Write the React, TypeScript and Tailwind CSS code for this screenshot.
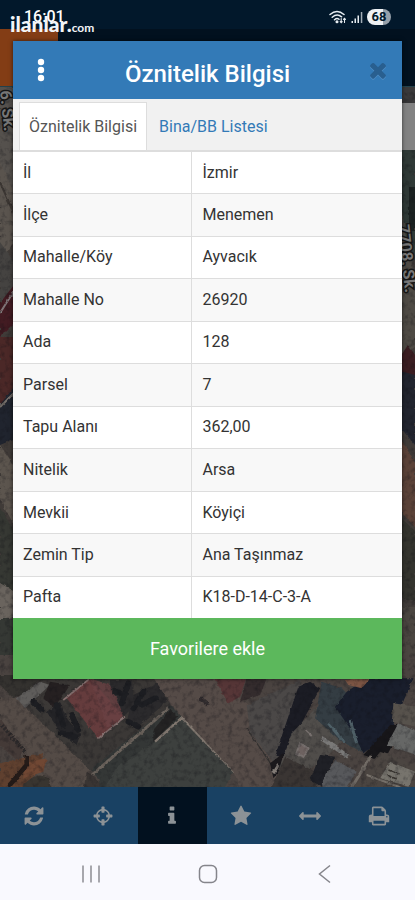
import React, { useState } from 'react';

const ICONS = {
  refresh:
    'M1639 1056q0 5-1 7-64 268-268 434.5t-478 166.5q-146 0-282.5-55t-243.5-157l-129 129q-19 19-45 19t-45-19-19-45v-448q0-26 19-45t45-19h448q26 0 45 19t19 45-19 45l-137 137q71 66 161 102t187 36q134 0 250-65t186-179q11-17 53-117 8-23 30-23h192q13 0 22.5 9.5t9.5 22.5zm25-800v448q0 26-19 45t-45 19h-448q-26 0-45-19t-19-45 19-45l138-138q-148-137-349-137-134 0-250 65t-186 179q-11 17-53 117-8 23-30 23h-199q-13 0-22.5-9.5t-9.5-22.5v-7q65-268 270-434.5t480-166.5q146 0 284 55.5t245 156.5l130-129q19-19 45-19t45 19 19 45z',
  crosshairs:
    'M1325 1024h-109q-26 0-45-19t-19-45v-128q0-26 19-45t45-19h109q-32-108-112.5-188.5t-188.5-112.5v109q0 26-19 45t-45 19h-128q-26 0-45-19t-19-45v-109q-108 32-188.5 112.5t-112.5 188.5h109q26 0 45 19t19 45v128q0 26-19 45t-45 19h-109q32 108 112.5 188.5t188.5 112.5v-109q0-26 19-45t45-19h128q26 0 45 19t19 45v109q108-32 188.5-112.5t112.5-188.5zm339-192v128q0 26-19 45t-45 19h-143q-37 161-154.5 278.5t-278.5 154.5v143q0 26-19 45t-45 19h-128q-26 0-45-19t-19-45v-143q-161-37-278.5-154.5t-154.5-278.5h-143q-26 0-45-19t-19-45v-128q0-26 19-45t45-19h143q37-161 154.5-278.5t278.5-154.5v-143q0-26 19-45t45-19h128q26 0 45 19t19 45v143q161 37 278.5 154.5t154.5 278.5h143q26 0 45 19t19 45z',
  info:
    'M1216 1344v128q0 26-19 45t-45 19h-512q-26 0-45-19t-19-45v-128q0-26 19-45t45-19h64v-384h-64q-26 0-45-19t-19-45v-128q0-26 19-45t45-19h384q26 0 45 19t19 45v576h64q26 0 45 19t19 45zm-128-1152v192q0 26-19 45t-45 19h-256q-26 0-45-19t-19-45v-192q0-26 19-45t45-19h256q26 0 45 19t19 45z',
  star:
    'M1728 647q0 22-26 48l-363 354 86 500q1 7 1 20 0 21-10.5 35.5t-30.5 14.5q-19 0-40-12l-449-236-449 236q-22 12-40 12-21 0-31.5-14.5t-10.5-35.5q0-6 2-20l86-500-364-354q-25-27-25-48 0-37 56-46l502-73 225-455q19-41 49-41t49 41l225 455 502 73q56 9 56 46z',
  arrows:
    'M1792 896q0 26-19 45l-256 256q-19 19-45 19t-45-19-19-45v-128h-1024v128q0 26-19 45t-45 19-45-19l-256-256q-19-19-19-45t19-45l256-256q19-19 45-19t45 19 19 45v128h1024v-128q0-26 19-45t45-19 45 19l256 256q19 19 19 45z',
  print:
    'M448 1536h896v-256h-896v256zm0-640h896v-384h-160q-40 0-68-28t-28-68v-160h-640v640zm1152 64q0-26-19-45t-45-19-45 19-19 45 19 45 45 19 45-19 19-45zm128 0v416q0 13-9.5 22.5t-22.5 9.5h-224v160q0 40-28 68t-68 28h-960q-40 0-68-28t-28-68v-160h-224q-13 0-22.5-9.5t-9.5-22.5v-416q0-79 56.5-135.5t135.5-56.5h64v-544q0-40 28-68t68-28h672q40 0 88 20t76 48l152 152q28 28 48 76t20 88v256h64q79 0 135.5 56.5t56.5 135.5z',
  times:
    'M1490 1322q0 40-28 68l-136 136q-28 28-68 28t-68-28l-294-294-294 294q-28 28-68 28t-68-28l-136-136q-28-28-28-68t28-68l294-294-294-294q-28-28-28-68t28-68l136-136q28-28 68-28t68 28l294 294 294-294q28-28 68-28t68 28l136 136q28 28 28 68t-28 68l-294 294 294 294q28 28 28 68z',
};

const ROWS = [
  ['İl', 'İzmir'],
  ['İlçe', 'Menemen'],
  ['Mahalle/Köy', 'Ayvacık'],
  ['Mahalle No', '26920'],
  ['Ada', '128'],
  ['Parsel', '7'],
  ['Tapu Alanı', '362,00'],
  ['Nitelik', 'Arsa'],
  ['Mevkii', 'Köyiçi'],
  ['Zemin Tip', 'Ana Taşınmaz'],
  ['Pafta', 'K18-D-14-C-3-A'],
];

const TOOLS: { icon: keyof typeof ICONS; label: string }[] = [
  { icon: 'refresh', label: 'Yenile' },
  { icon: 'crosshairs', label: 'Konum' },
  { icon: 'info', label: 'Bilgi' },
  { icon: 'star', label: 'Favoriler' },
  { icon: 'arrows', label: 'Ölçüm' },
  { icon: 'print', label: 'Yazdır' },
];

const Icon: React.FC<{ name: keyof typeof ICONS; className?: string }> = ({ name, className }) => (
  <svg viewBox="0 0 1792 1792" fill="currentColor" className={className} aria-hidden="true">
    <path d={ICONS[name]} />
  </svg>
);

// Dimmed satellite view behind the dialog
const SatelliteMap: React.FC = () => (
  <svg viewBox="0 0 415 700" preserveAspectRatio="xMidYMax slice" className="absolute inset-0 w-full h-full" aria-hidden="true">
    <defs>
      <filter id="soft" x="0" y="0" width="100%" height="100%" colorInterpolationFilters="sRGB">
        <feTurbulence type="fractalNoise" baseFrequency="0.2" numOctaves="2" seed="4" result="n" />
        <feDisplacementMap in="SourceGraphic" in2="n" xChannelSelector="R" yChannelSelector="G" scale="3" result="d" />
        <feGaussianBlur in="d" stdDeviation="0.6" />
      </filter>
      <filter id="grain" x="0" y="0" width="100%" height="100%" colorInterpolationFilters="sRGB">
        <feTurbulence type="fractalNoise" baseFrequency="0.18" numOctaves="3" seed="9" />
        <feColorMatrix values="0 0 0 0 0.06  0 0 0 0 0.06  0 0 0 0 0.08  2.4 0 0 0 -1.1" />
      </filter>
    </defs>
    <rect width="415" height="700" fill="#403b38" />
    <g filter="url(#soft)">
      {/* left edge */}
      <path d="M0 0h14v110H0z" fill="#55514d" />
      <path d="M0 75l14 30v50l-14 20z" fill="#5a544e" />
      <path d="M0 95l14 32M0 165l14 22" stroke="#3c3733" strokeWidth="2" />
      <path d="M0 155l14 20v50L0 236z" fill="#454341" />
      <path d="M0 216l14-18v38L0 250z" fill="#421b22" />
      <path d="M0 226l14-22" stroke="#81777a" strokeWidth="2" />
      <path d="M0 250h14v64l-14 16z" fill="#4b2827" />
      <path d="M0 318l14-18v52l-14 6z" fill="#20242e" />
      <path d="M0 320l14-14" stroke="#77716b" strokeWidth="2" />
      <path d="M0 358l14 20v60l-14-26z" fill="#5c554e" />
      <path d="M0 420l14 24v80l-14 8z" fill="#363833" />
      <path d="M0 496l14 8v26l-14 5z" fill="#6a645e" />
      <path d="M0 532h14v50H0z" fill="#353834" />
      {/* right edge */}
      <path d="M400 0h15v18h-15z" fill="#3a393a" />
      <path d="M400 62h15v110h-15z" fill="#2f3936" />
      <path d="M409 100h6v44h-6z" fill="#1b2221" />
      <path d="M400 110l6 40 9 40v70l-15 10z" fill="#4e4a44" />
      <path d="M400 270l8-12 7 10v26h-15z" fill="#3b1d21" />
      <path d="M400 284l15 4v70l-15-18z" fill="#22252f" />
      <path d="M400 350l15 26v64l-15-16z" fill="#5b4238" />
      <path d="M400 430l15 14v70l-15-4z" fill="#34342e" />
      <path d="M400 520h15v70h-15z" fill="#4a4540" />
      {/* blocks below the dialog */}
      <g transform="translate(0 588) scale(0.3334)">
        <path d="M0-60h1250v420H0z" fill="#4a4340" />
        <path d="M0 0h190l-60 30-90 40L0 30z" fill="#34322f" />
        <path d="M110 20L250-10H500L510 90 270 285 60 80z" fill="#3b3836" />
        <path d="M0 70l50 0 220 215-10 60H150L0 170z" fill="#544b46" />
        <path d="M50 70l70-50 30 10-75 70z" fill="#5f5d5b" />
        <path d="M330 15l70 0 0 80-30 30-40-60zM400 60l80-40 20 60-80 70-40-10z" fill="#2b2a2c" />
        <path d="M200 70L270 10l100 115-75 65z" fill="#653c3d" />
        <path d="M270 10L330 30l42 92-50 36z" fill="#6a4143" opacity="0.8" />
        <path d="M190 75l80-65M295 190l80-65" stroke="#86706f" strokeWidth="5" />
        <path d="M150 20l60 10-20 30-30 40-30-30z" fill="#252021" />
        <path d="M140 110l40-30 20 50 40 50-10 30-50-40z" fill="#242427" />
        <path d="M345 50l30 8M385 25l-20 60M400 100l30-50M385 140l30 15M425 90l40-20M170 90l20 60M185 175l40 10M215 120l20 45M100 80l25 25" stroke="#1d1e22" strokeWidth="17" strokeLinecap="round" />
        <path d="M270 285L510 90l110 110v145H280l20-30z" fill="#343736" />
        <path d="M270 305L505 100" stroke="#6b635c" strokeWidth="9" />
        <path d="M460 165l50-60 25 20-75 75z" fill="#242323" />
        <path d="M545 130L700 290l-30 55H310l40-70 115-75z" fill="#3d403e" />
        <path d="M465 200l80-72 160 165" fill="none" stroke="#81776f" strokeWidth="7" />
        <path d="M455 0H640l240 210 10 130H720L700 290 510 85z" fill="#554b47" />
        <path d="M600 70l25 20" stroke="#302b2d" strokeWidth="12" />
        <path d="M640 5h100l-20 60-35 20z" fill="#563637" />
        <path d="M740 10h60l-20 50-60 20z" fill="#342c2d" />
        <path d="M740 90L900 15l10 30-80 230-80-105z" fill="#4b4847" />
        <path d="M740 160l75 110" stroke="#353332" strokeWidth="4" />
        <path d="M895 35l35-15 30 20-110 210-24-10z" fill="#1b1c24" />
        <path d="M810 265l40-30-10 50-20 25z" fill="#1b191c" />
        <path d="M970 75l40 30 20 90-50 50-60 45-85-5 40-110z" fill="#504d4a" />
        <path d="M965 20l60 20 80 80-20 110-60-30-80-70z" fill="#343d43" />
        <path d="M1040 50L1100 10h140l-70 160-80 65-30-60-55-80z" fill="#191e2c" />
        <path d="M1170 150l-80 90 60 20 60-110z" fill="#171619" />
        <path d="M1035 15l80-10-30 35-40-10z" fill="#7c5544" />
        <path d="M985 145l50 60M1050 135l20 70" stroke="#4f6067" strokeWidth="9" />
        <path d="M965 190l80 55" stroke="#7a7978" strokeWidth="13" />
        <path d="M900 205l25 15-15 25-22-8zM915 165l20 18" fill="#6d6260" stroke="#77706e" strokeWidth="6" />
        <path d="M820 325l35-80 100 50-5 50H810z" fill="#3a3533" />
        <path d="M820 295l15-25" stroke="#827b76" strokeWidth="8" />
        <path d="M960 240l45 5-40 90-35-20z" fill="#1f2026" />
        <path d="M965 320l40-65 65 35-30 50-70 0z" fill="#57585b" />
        <path d="M1060 340l80-110 110 40v80h-190z" fill="#4b4541" />
        <path d="M1050 345l65-105" stroke="#716b65" strokeWidth="9" />
        <path d="M1180 85l70 10v60l-75-15z" fill="#57524c" />
        <path d="M1160 210l35-65 55 25v70z" fill="#666766" />
        <path d="M1140 310l30-50 75 30-20 45z" fill="#77746d" />
        <path d="M1165 285l30 12M1160 300l30 12" stroke="#37332f" strokeWidth="5" />
        <path d="M1100 300l150 55" stroke="#77716a" strokeWidth="6" />
        <path d="M0 130l70 90-15 40L0 210z" fill="#443a37" />
        <path d="M5 150l70 80" stroke="#2c292a" strokeWidth="12" strokeDasharray="7 4" />
        <path d="M0 265l130-30-20 60-50 50H0z" fill="#5f402f" />
        <path d="M70 265l70-15-10 40-60 20z" fill="#704733" />
        <path d="M25 335l55-65V240" fill="none" stroke="#251b18" strokeWidth="14" />
        <path d="M70 330q40-45 75-20l10 30H70z" fill="#393530" />
        <path d="M260 290l-10 55h60l-25-40z" fill="#3a3533" />
      </g>
    </g>
    <rect width="415" height="700" filter="url(#grain)" opacity="0.35" />
    <g fontFamily="Roboto, 'Liberation Sans', sans-serif" fontWeight="700" fontSize="16" fill="#777" stroke="#161616" strokeWidth="3" paintOrder="stroke">
      <text transform="translate(0 4) rotate(84)">6. Sk.</text>
      <text transform="translate(398 138) rotate(84)">7708. Sk.</text>
    </g>
  </svg>
);

const StatusBar: React.FC = () => (
  <div className="flex items-center justify-between h-[29px] pt-1 px-6 bg-[#02182b]">
    <span className="text-base font-medium text-white">16:01</span>
    <div className="flex items-center gap-1">
      <svg viewBox="0 0 18 14" className="w-[18px] h-[14px]" fill="none" stroke="#e7edf2" strokeWidth="1.5" strokeLinecap="round" aria-hidden="true">
        <path d="M1 4.5Q8 -1.5 15 4.5M3.2 7.2Q8 3 12.6 6.8M5.5 9.7Q8 7.6 10 9.3" />
        <circle cx="8" cy="11.8" r="0.8" fill="#e7edf2" />
        <path d="M12.2 8.6v4M11.2 11.6l1 1 1-1M15.5 12.4v-4M14.5 9.4l1-1 1 1" strokeWidth="1.1" />
      </svg>
      <svg viewBox="0 0 12 14" className="w-3 h-[14px]" fill="#e7edf2" aria-hidden="true">
        <path d="M0.5 11h1.5v2H0.5zM3.5 8.5H5V13H3.5zM6.5 5.5H8V13H6.5z" />
        <path d="M9.8 2h1.5v11H9.8z" opacity="0.7" />
      </svg>
      <span className="flex items-center justify-center w-6 h-4 rounded-full bg-linear-to-r from-[#eef1f4] from-68% to-[#96a0aa] to-68% text-[13px] leading-4 font-bold text-[#02182b]">
        68
      </span>
    </div>
  </div>
);

const AttributeDialog: React.FC = () => {
  const [tab, setTab] = useState(0);
  const tabs = ['Öznitelik Bilgisi', 'Bina/BB Listesi'];

  return (
    <div role="dialog" aria-labelledby="dialog-title" className="bg-white shadow-[0_0_4px_rgba(0,0,0,0.6)]">
      <div className="flex items-center justify-between h-[58px] px-3 bg-[#337ab7]">
        <button type="button" aria-label="Menü" className="flex justify-center w-8">
          <svg viewBox="0 0 8 24" className="w-2 h-6" fill="#fff" aria-hidden="true">
            <circle cx="4" cy="4" r="3.2" />
            <circle cx="4" cy="12" r="3.2" />
            <circle cx="4" cy="20" r="3.2" />
          </svg>
        </button>
        <h1 id="dialog-title" className="pt-2 text-2xl font-medium text-white">Öznitelik Bilgisi</h1>
        <button type="button" aria-label="Kapat" className="flex justify-end w-8 text-[#295f8f]">
          <Icon name="times" className="w-6 h-6 drop-shadow-[0_1px_0_#4f8dc4]" />
        </button>
      </div>

      <div role="tablist" className="flex items-end h-[53px] px-[6px] bg-[#f1f1f1] border-b-2 border-[#ddd]">
        {tabs.map((label, index) => (
          <button
            key={label}
            type="button"
            role="tab"
            aria-selected={tab === index}
            onClick={() => setTab(index)}
            className={`h-12 text-base border border-b-0 ${
              tab === index ? 'px-[9px] bg-white border-[#ddd] text-[#555]' : 'px-[11px] border-transparent text-[#337ab7]'
            }`}
          >
            {label}
          </button>
        ))}
      </div>

      <table className="w-full h-[466px] table-fixed border-collapse text-base text-[#333]">
        <tbody>
          {ROWS.map(([name, value]) => (
            <tr key={name} className="odd:bg-white even:bg-[#f8f8f8] border-b border-[#ddd] last:border-b-0">
              <th scope="row" className="w-[46%] px-[10px] text-left font-normal border-r border-[#ddd]">{name}</th>
              <td className="px-[10px]">{value}</td>
            </tr>
          ))}
        </tbody>
      </table>

      <button type="button" className="block w-full h-[61px] bg-[#5cb85c] text-lg text-white">
        Favorilere ekle
      </button>
    </div>
  );
};

const App: React.FC = () => {
  return (
    <div className="relative flex flex-col min-h-screen overflow-hidden bg-[#02111f] font-[Roboto,'Liberation_Sans',sans-serif]">
      <StatusBar />
      <div className="h-[58px] border-b border-[#23414b] bg-[#02111f]">
        <div className="w-[58px] h-full bg-[#833d15]" />
      </div>

      <main className="relative flex-1 overflow-hidden">
        <SatelliteMap />
        <div className="relative mt-4 ml-4 h-[47px] bg-[#828282]" />
      </main>

      <nav className="grid grid-cols-6 h-[57px] pr-[2px] bg-[#194163]">
        {TOOLS.map((tool) => (
          <button
            key={tool.icon}
            type="button"
            aria-label={tool.label}
            className={`flex items-center justify-center text-[#8c9296] ${tool.icon === 'info' ? 'bg-[#02111f]' : ''}`}
          >
            <Icon name={tool.icon} className="w-[22px] h-[22px]" />
          </button>
        ))}
      </nav>

      <div className="flex items-center justify-center gap-[98px] h-14 pt-1 bg-[#f9f9fe] text-[#85858b]">
        <button type="button" aria-label="Son uygulamalar">
          <svg viewBox="0 0 18 20" className="w-[18px] h-5" stroke="currentColor" strokeWidth="1.4" aria-hidden="true">
            <path d="M1 1.5v17M9 1.5v17M17 1.5v17" />
          </svg>
        </button>
        <button type="button" aria-label="Ana ekran">
          <svg viewBox="0 0 20 20" className="w-5 h-5" fill="none" stroke="currentColor" strokeWidth="1.5" aria-hidden="true">
            <rect x="1.5" y="1.5" width="17" height="17" rx="5" />
          </svg>
        </button>
        <button type="button" aria-label="Geri">
          <svg viewBox="0 0 18 20" className="w-[18px] h-5" fill="none" stroke="currentColor" strokeWidth="1.5" aria-hidden="true">
            <path d="M14 1.5L3.5 10L14 18.5" />
          </svg>
        </button>
      </div>

      {/* Site mark over the status bar */}
      <div className="absolute top-3 left-[10px] flex items-baseline font-[Lato,sans-serif] font-black text-[#f3f5f7]">
        <span className="text-[21px] leading-6">ilanlar.</span>
        <span className="text-xs font-bold">com</span>
      </div>

      <div className="absolute inset-x-0 top-[41px] px-[13px]">
        <AttributeDialog />
      </div>
    </div>
  );
};

export default App;
